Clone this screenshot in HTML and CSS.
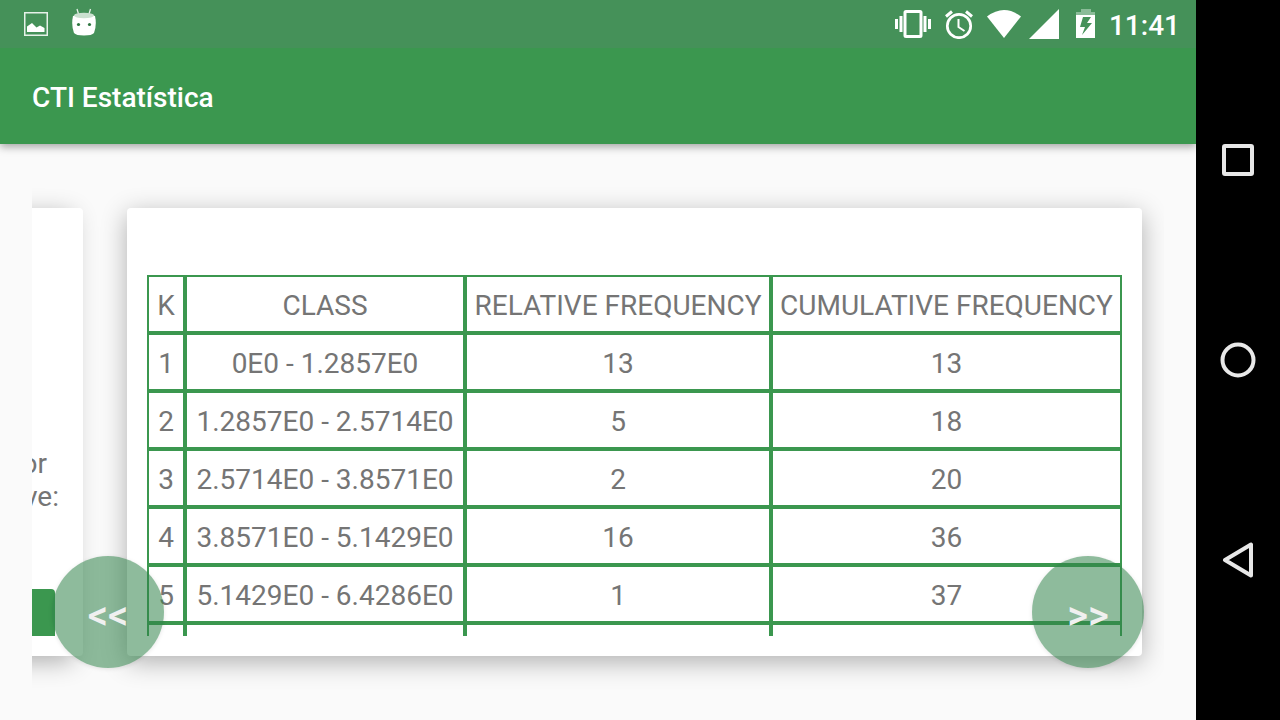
FILE: index.html
```html
<!DOCTYPE html>
<html lang="pt">
<head>
<meta charset="utf-8">
<title>CTI Estatística</title>
<link rel="stylesheet" href="styles.css">
</head>
<body>
<div class="screen">
  <div class="status-bar">
    <div class="status-group notifications">
      <svg width="24" height="24" viewBox="0 0 24 24"><path d="M.75.75h22.5v22.5H.75z" fill="none" stroke="#e6f1e9" stroke-width="1.5"/><path d="M3 20v-5.500l5-3.500 4.500 4.500 3.500-2 4.500 2.500v4z" fill="#fff"/></svg>
      <svg class="robot" width="24" height="28" viewBox="0 0 24 28"><path d="M5 1l1.500 5M18.500 1L17 6" stroke="#e6f1e9" stroke-width="1.300" fill="none"/><path d="M1 8Q12 4 23 8Q25 17 22 25Q20 27.500 12 27.500Q4 27.500 2 25Q-1 17 1 8z" fill="#fff"/><ellipse cx="12" cy="7.500" rx="10" ry="2.700" fill="#cbe1d0"/><circle cx="6.500" cy="16.500" r="1.600" fill="#2e7640"/><circle cx="17.500" cy="16.500" r="1.600" fill="#2e7640"/></svg>
    </div>
    <div class="status-group">
      <svg width="36" height="28" viewBox="0 0 36 28"><path d="M11 1.500h14q1 0 1 1v23q0 1-1 1H11q-1 0-1-1v-23q0-1 1-1z" fill="none" stroke="#fff" stroke-width="3"/><path d="M0 9h3v10H0zM4.500 6h3v16h-3zM28.500 6h3v16h-3zM33 9h3v10h-3z" fill="#fff"/></svg>
      <svg class="alarm" width="28" height="29" viewBox="0 0 28 29"><circle cx="14" cy="16" r="11.700" fill="none" stroke="#fff" stroke-width="2.700"/><path d="M1 6.500l6-5M27 6.500l-6-5" stroke="#fff" stroke-width="3"/><path d="M13.500 9v8l6 4" fill="none" stroke="#fff" stroke-width="2"/></svg>
      <svg class="wifi" width="34" height="28" viewBox="0 0 34 28"><path d="M0 6.500Q17-6.500 34 6.500L17 28z" fill="#fff"/></svg>
      <svg class="signal" width="30" height="30" viewBox="0 0 30 30"><path d="M30 0v30H0z" fill="#fff"/></svg>
      <svg class="battery" width="20" height="30" viewBox="0 0 20 30"><path d="M5 0h10v3h4v3H0V3h5z" fill="#8abc98"/><path d="M0 6h19v23H0zM7 8L4 18h5L6 26l10-12h-5l4-6z" fill="#fff" fill-rule="evenodd"/></svg>
      <span class="clock">11:41</span>
    </div>
  </div>
  <header class="app-bar"><h1 class="app-title">CTI Estatística</h1></header>
  <main class="content">
    <div class="carousel">
      <section class="card card-previous">
        <p class="label"><span class="label-line label-first">or</span><span class="label-line">ve:</span></p>
        <button class="submit" type="button" aria-label="OK"></button>
      </section>
      <section class="card card-current">
        <div class="table-view">
          <table class="frequency">
            <colgroup><col class="col-k"><col class="col-class"><col class="col-relative"><col></colgroup>
            <thead><tr><th>K</th><th>CLASS</th><th>RELATIVE FREQUENCY</th><th>CUMULATIVE FREQUENCY</th></tr></thead>
            <tbody>
              <tr><td>1</td><td>0E0 - 1.2857E0</td><td>13</td><td>13</td></tr>
              <tr><td>2</td><td>1.2857E0 - 2.5714E0</td><td>5</td><td>18</td></tr>
              <tr><td>3</td><td>2.5714E0 - 3.8571E0</td><td>2</td><td>20</td></tr>
              <tr><td>4</td><td>3.8571E0 - 5.1429E0</td><td>16</td><td>36</td></tr>
              <tr><td>5</td><td>5.1429E0 - 6.4286E0</td><td>1</td><td>37</td></tr>
              <tr><td></td><td></td><td></td><td></td></tr>
            </tbody>
          </table>
        </div>
      </section>
    </div>
    <button class="fab fab-back" type="button">&lt;&lt;</button>
    <button class="fab fab-next" type="button">&gt;&gt;</button>
  </main>
</div>
<nav class="nav-bar">
  <button class="nav-button" type="button" aria-label="Recents"><svg width="36" height="36" viewBox="0 0 36 36"><rect x="4" y="4" width="28" height="28" rx="1" stroke-linejoin="round"/></svg></button>
  <button class="nav-button" type="button" aria-label="Home"><svg width="36" height="36" viewBox="0 0 36 36"><circle cx="18" cy="18" r="15.500"/></svg></button>
  <button class="nav-button" type="button" aria-label="Back"><svg width="36" height="36" viewBox="0 0 36 36"><path d="M31 2.500v31L5 18z" stroke-linejoin="round"/></svg></button>
</nav>
</body>
</html>
```
FILE: styles.css
```css
* { box-sizing: border-box; }
body {
  margin: 0;
  height: 100vh;
  display: flex;
  overflow: hidden;
  background: #fafafa;
  color: #757575;
  font: 28px/33px Roboto, sans-serif;
}
button { border: 0; padding: 0; font: inherit; }
.screen { flex: 1; min-width: 0; display: flex; flex-direction: column; overflow: hidden; }
.status-bar {
  flex: none;
  height: 48px;
  padding: 0 16px 0 24px;
  display: flex;
  align-items: center;
  justify-content: space-between;
  background: #459159;
  color: #fff;
  position: relative;
  z-index: 2;
}
.status-group { display: flex; align-items: center; }
.notifications { gap: 24px; }
.robot { margin-bottom: 4px; }
.alarm { margin-left: 14px; }
.wifi { margin-left: 14px; }
.signal { margin-left: 8px; }
.battery { margin-left: 17px; }
.clock { margin-left: 13px; padding-top: 2px; font-weight: 500; }
.app-bar {
  flex: none;
  height: 96px;
  padding: 0 32px;
  display: flex;
  align-items: center;
  background: #3b974f;
  box-shadow: 0 3px 8px rgba(0, 0, 0, .34);
  position: relative;
  z-index: 1;
}
.app-title { margin: 0; padding-top: 2px; color: #fff; font-size: 28px; font-weight: 500; }
.content { flex: 1; min-height: 0; position: relative; padding: 0 32px; }
.carousel {
  height: 100%;
  padding: 64px 22px 64px 0;
  display: flex;
  justify-content: flex-end;
  gap: 44px;
  overflow: hidden;
}
.card {
  flex: none;
  display: flex;
  flex-direction: column;
  padding: 0 20px 20px;
  border-radius: 4px;
  background: #fff;
}
.card-previous {
  width: 120px;
  padding: 0 24px 20px 0;
  justify-content: flex-end;
  box-shadow: -10px 6px 24px rgba(0, 0, 0, .3);
}
.card-current { width: calc(100% - 95px); box-shadow: 0 6px 26px rgba(0, 0, 0, .3); }
.label { margin: 0 0 76px; text-align: right; }
.label-line { display: block; }
.label-first { padding-right: 12px; }
.submit { height: 47px; margin-right: 4px; border-radius: 4px 4px 0 0; background: #3b974f; }
.table-view { flex: 1; min-height: 0; padding-top: 67px; overflow: hidden; }
.frequency { width: 100%; border-spacing: 0; text-align: center; }
.col-k { width: 38px; }
.col-class { width: 280px; }
.col-relative { width: 306px; }
.frequency th, .frequency td {
  height: 58px;
  padding: 9px 6px 7px;
  border: 2px solid #3b974f;
  font-weight: 400;
  white-space: nowrap;
}
.fab {
  position: absolute;
  bottom: 52px;
  width: 112px;
  height: 112px;
  padding-top: 6px;
  border-radius: 50%;
  background: rgba(50, 132, 74, .55);
  box-shadow: 0 1px 4px rgba(0, 0, 0, .1);
  color: #f0f0f0;
  font-size: 40px;
  font-weight: 500;
}
.fab-back { left: 52px; }
.fab-next { right: 52px; }
.nav-bar { flex: none; width: 84px; display: flex; flex-direction: column; justify-content: center; background: #000; }
.nav-button { flex: 0 1 200px; display: flex; align-items: center; justify-content: center; background: none; }
.nav-button svg { fill: none; stroke: #e8e8e8; stroke-width: 4; }
```
